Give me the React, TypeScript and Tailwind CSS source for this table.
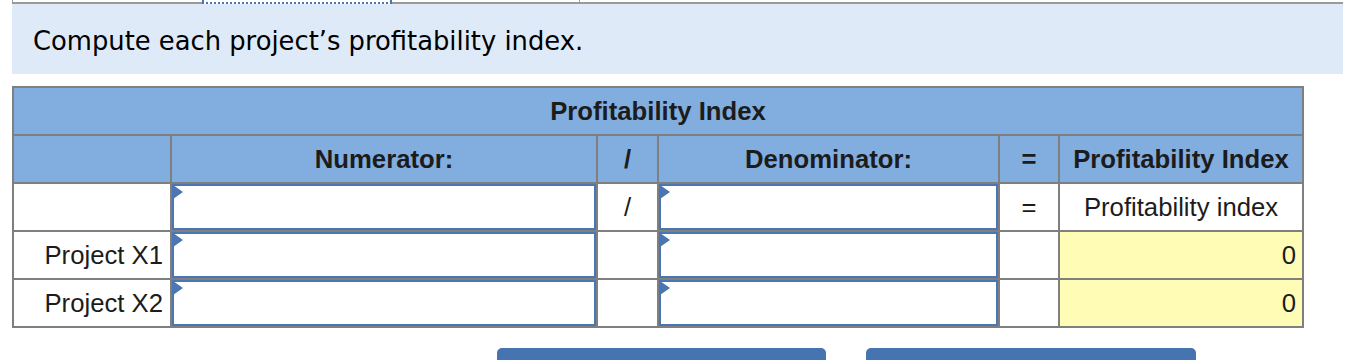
import React from 'react';

interface Row {
  label: string;
  value: string;
}

const rows: Row[] = [
  { label: 'Project X1', value: '0' },
  { label: 'Project X2', value: '0' },
];

const InputCell: React.FC = () => (
  <div className="bg-white">
    <div className="relative h-full border-2 border-[#4a76b4] bg-white">
      <span className="absolute -top-px -left-px h-0 w-0 border-y-[7px] border-l-[10px] border-y-transparent border-l-[#4a76b4]" />
    </div>
  </div>
);

const App: React.FC = () => {
  return (
    <div className="h-[360px] w-[1360px] overflow-hidden bg-white">
      {/* tab strip remnants */}
      <div className="flex h-[4px] pl-[12px] pr-[17px]">
        <div className="w-[190px] border-b-2 border-l border-[#9a9a9a]" />
        <div className="w-[190px] border-x-2 border-b-2 border-dotted border-[#4a76b4]" />
        <div className="w-[188px] border-b-2 border-r border-[#9a9a9a]" />
        <div className="flex-1 border-b-2 border-[#9a9a9a]" />
      </div>

      <div className="mx-[12px] mr-[17px] flex h-[70px] items-center bg-[#deeaf7] pl-[21px] pt-[4px]">
        <p className="font-['DejaVu_Sans',sans-serif] text-[25.8px] text-black">
          Compute each project’s profitability index.
        </p>
      </div>

      <div className="ml-[12px] mt-[12px] grid w-[1292px] grid-cols-[156px_424px_59px_339px_58px_242px] auto-rows-[46px] gap-[2px] bg-[#7f7f7f] p-[2px] font-['Liberation_Sans',Arial,sans-serif] text-[25.7px] text-[#1c1c1c]">
        <div className="col-span-6 flex items-center justify-center bg-[#81addf] font-bold">
          Profitability Index
        </div>

        <div className="bg-[#81addf]" />
        <div className="flex items-center justify-center bg-[#81addf] font-bold">Numerator:</div>
        <div className="flex items-center justify-center bg-[#81addf] font-bold">/</div>
        <div className="flex items-center justify-center bg-[#81addf] font-bold">Denominator:</div>
        <div className="flex items-center justify-center bg-[#81addf] font-bold">=</div>
        <div className="flex items-center justify-center bg-[#81addf] font-bold">Profitability Index</div>

        <div className="bg-white" />
        <InputCell />
        <div className="flex items-center justify-center bg-white">/</div>
        <InputCell />
        <div className="flex items-center justify-center bg-white">=</div>
        <div className="flex items-center justify-center bg-white">Profitability index</div>

        {rows.map((row) => (
          <React.Fragment key={row.label}>
            <div className="flex items-center justify-end bg-white pr-[7px]">{row.label}</div>
            <InputCell />
            <div className="bg-white" />
            <InputCell />
            <div className="bg-white" />
            <div className="flex items-center justify-end bg-[#fffcb6] pr-[6px]">{row.value}</div>
          </React.Fragment>
        ))}
      </div>

      <div className="mt-[20px] flex gap-[40px] pl-[497px]">
        <button className="h-[20px] w-[329px] rounded-t-[5px] bg-[#4674b0]" />
        <button className="h-[20px] w-[330px] rounded-t-[5px] bg-[#4674b0]" />
      </div>
    </div>
  );
};

export default App;
